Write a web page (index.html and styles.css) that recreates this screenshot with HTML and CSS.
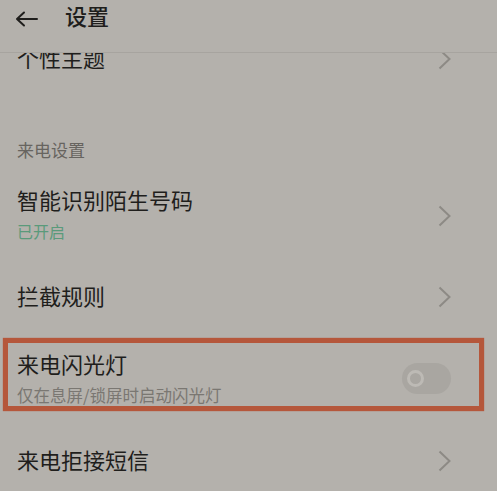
FILE: index.html
```html
<!DOCTYPE html>
<html lang="zh-CN">
  <head>
    <meta charset="UTF-8" />
    <meta name="viewport" content="width=device-width, initial-scale=1.0" />
    <title>设置</title>
    <link rel="stylesheet" href="styles.css">
  </head>
  <body>
    <div class="screen">
      <header class="topbar">
        <svg class="back" width="24" height="16" viewBox="0 0 24 16">
          <path d="M22 8H2M9 1.5L2 8l7 6.5" fill="none" stroke="#1f1e1c" stroke-width="2" stroke-linecap="round" stroke-linejoin="round" />
        </svg>
        <h1 class="title">设置</h1>
      </header>

      <div class="list">
        <!-- list is scrolled a little, first row sits under the top bar -->
        <div class="row row-clipped">
          <span class="row-title">个性主题</span>
          <svg class="chevron" width="13" height="22" viewBox="0 0 13 22">
            <path d="M1.5 1.5l10 9.5-10 9.5" fill="none" stroke="#8d8a85" stroke-width="2" />
          </svg>
        </div>

        <div class="group-label">来电设置</div>

        <div class="row row-two">
          <div class="row-text">
            <span class="row-title">智能识别陌生号码</span>
            <span class="row-sub row-sub-on">已开启</span>
          </div>
          <svg class="chevron" width="13" height="22" viewBox="0 0 13 22">
            <path d="M1.5 1.5l10 9.5-10 9.5" fill="none" stroke="#8d8a85" stroke-width="2" />
          </svg>
        </div>

        <div class="row">
          <span class="row-title">拦截规则</span>
          <svg class="chevron" width="13" height="22" viewBox="0 0 13 22">
            <path d="M1.5 1.5l10 9.5-10 9.5" fill="none" stroke="#8d8a85" stroke-width="2" />
          </svg>
        </div>

        <div class="row row-two row-marked">
          <div class="row-text">
            <span class="row-title">来电闪光灯</span>
            <span class="row-sub">仅在息屏/锁屏时启动闪光灯</span>
          </div>
          <div class="switch">
            <span class="knob"></span>
          </div>
        </div>

        <div class="row">
          <span class="row-title">来电拒接短信</span>
          <svg class="chevron" width="13" height="22" viewBox="0 0 13 22">
            <path d="M1.5 1.5l10 9.5-10 9.5" fill="none" stroke="#8d8a85" stroke-width="2" />
          </svg>
        </div>
      </div>
    </div>
  </body>
</html>
```

FILE: styles.css
```css
html,
body {
  height: 100%;
  margin: 0;
  overflow: hidden;
}

body {
  font-family: "Noto Sans CJK SC", "Noto Sans", sans-serif;
  background-color: #b4b1ac;
  color: #1f1e1c;
}

.screen {
  display: flex;
  flex-direction: column;
  height: 100%;
}

.topbar {
  display: flex;
  align-items: flex-start;
  height: 52px;
  padding: 2px 0 0 15px;
  box-sizing: content-box;
  height: 50px;
  border-bottom: 1px solid #a7a49f;
  background-color: #b4b1ac;
  position: relative;
  z-index: 2;
}

.back {
  display: block;
  margin-top: 9px;
}

.title {
  margin: 0 0 0 26px;
  font-size: 22px;
  font-weight: 500;
  line-height: 26px;
}

.list {
  flex: 1;
  overflow: hidden;
}

.row {
  display: flex;
  justify-content: space-between;
  align-items: center;
  height: 74px;
  padding: 0 46px 0 17px;
  box-sizing: border-box;
}

.row-clipped {
  height: 58px;
  margin-top: -23px; /* scrolled under the bar */
}

.row-title {
  font-size: 22px;
  line-height: 32px;
  margin-top: -5px;
}

.row-two {
  height: auto;
  padding-top: 12px;
  padding-bottom: 14px;
}

.row-two .row-title {
  margin-top: -3px;
}

.row-text {
  display: flex;
  flex-direction: column;
}

.row-sub {
  margin-top: 1px;
  font-size: 16.5px;
  line-height: 30px;
  color: #7a7772;
}

.row-sub-on {
  font-size: 16px;
  color: #5a9a7b;
}

.group-label {
  display: flex;
  align-items: center;
  height: 46px;
  margin-top: 40px;
  padding: 0 0 3px 17px;
  box-sizing: border-box;
  font-size: 17px;
  color: #67645f;
}

.chevron {
  display: block;
  flex-shrink: 0;
}

/* red marker drawn round the flash row */
.row-marked {
  position: relative;
  padding-top: 16px;
}

.row-marked::after {
  content: "";
  position: absolute;
  top: 4px;
  left: 3px;
  right: 13px;
  bottom: 13px;
  border: 5px solid #b5573b;
  box-shadow: 0 0 1px #b5573b;
}

.switch {
  display: flex;
  align-items: center;
  width: 49px;
  height: 31px;
  margin-top: -3px;
  padding-left: 5px;
  box-sizing: border-box;
  border-radius: 16px;
  background-color: #a9a6a1;
}

.knob {
  width: 17px;
  height: 17px;
  box-sizing: border-box;
  border: 3px solid #bdbab5;
  border-radius: 50%;
}
```
